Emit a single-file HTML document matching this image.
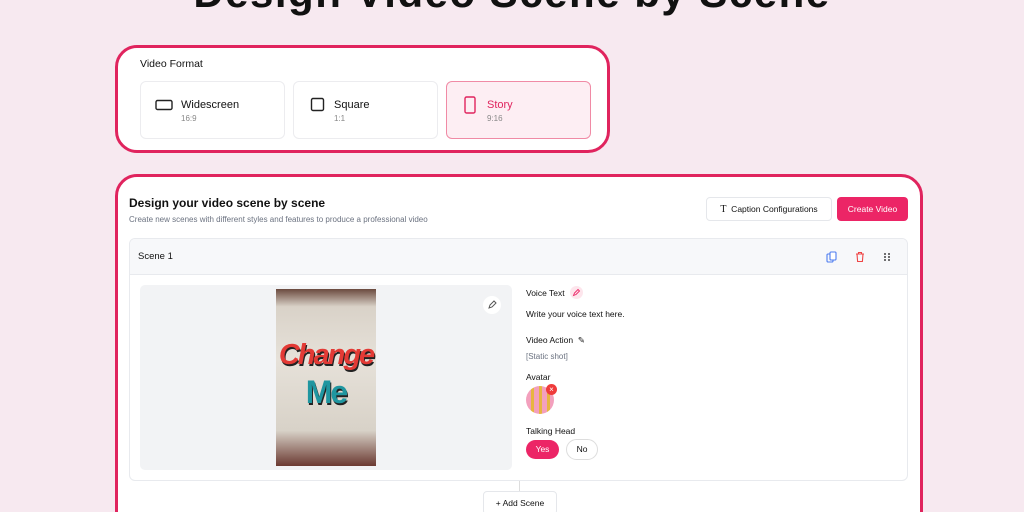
<!DOCTYPE html>
<html style="width:1024px;height:512px;overflow:hidden"><head><style>
*{box-sizing:border-box;margin:0;padding:0}
body{width:1024px;height:512px;background:#f7e9f0;font-family:"Liberation Sans",sans-serif;position:relative;overflow:hidden;color:#111}
.abs{position:absolute}
h1{position:absolute;left:0;width:1024px;text-align:center;top:-31px;font-size:42px;font-weight:bold;color:#111;letter-spacing:1.5px}
.card1{left:115px;top:45px;width:495px;height:108px;background:#fff;border:3px solid #e0245e;border-radius:22px}
.opt{position:absolute;top:33px;width:145px;height:58px;border:1px solid #ececef;border-radius:6px;background:#fff}
.opt .t{position:absolute;left:40px;top:17px;font-size:11px}
.opt .s{position:absolute;left:40px;top:32px;font-size:8px;color:#888}
.card2{left:115px;top:174px;width:808px;height:360px;background:#fff;border:3px solid #e0245e;border-radius:22px}
.btn{position:absolute;font-size:8.5px;border-radius:4px}
</style></head><body>
<h1>Design Video Scene by Scene</h1>
<div class="abs card1">
 <div class="abs" style="left:22px;top:10px;font-size:10.5px">Video Format</div>
 <div class="opt" style="left:22px"><svg class="abs" style="left:14px;top:17px" width="18" height="12"><rect x="1" y="1.5" width="16" height="9" rx="1.5" fill="none" stroke="#222" stroke-width="1.4"/></svg><div class="t">Widescreen</div><div class="s">16:9</div></div>
 <div class="opt" style="left:175px"><svg class="abs" style="left:16px;top:15px" width="16" height="16"><rect x="1.5" y="1.5" width="12" height="12" rx="1.5" fill="none" stroke="#222" stroke-width="1.4"/></svg><div class="t">Square</div><div class="s">1:1</div></div>
 <div class="opt" style="left:328px;background:#fdeef3;border-color:#f08aa5"><svg class="abs" style="left:17px;top:14px" width="12" height="18"><rect x="1" y="1" width="10" height="16" rx="1.5" fill="none" stroke="#e0245e" stroke-width="1.4"/></svg><div class="t" style="color:#e0245e">Story</div><div class="s">9:16</div></div>
</div>
<div class="abs card2">
 <div class="abs" style="left:11px;top:19px;font-size:12px;font-weight:bold">Design your video scene by scene</div>
 <div class="abs" style="left:11px;top:38px;font-size:8px;color:#6b7280">Create new scenes with different styles and features to produce a professional video</div>
 <div class="btn" style="left:588px;top:20px;width:126px;height:24px;border:1px solid #e5e7eb;line-height:22px;text-align:center"><b style="font-family:'Liberation Serif',serif;font-size:10px;font-weight:normal">T</b>&nbsp; Caption Configurations</div>
 <div class="btn" style="left:719px;top:20px;width:71px;height:24px;background:#ec2566;color:#fff;line-height:24px;text-align:center">Create Video</div>
 <div class="abs" style="left:11px;top:61px;width:779px;height:243px;border:1px solid #e8eaee;border-radius:6px;overflow:hidden">
  <div class="abs" style="left:0;top:0;width:779px;height:36px;background:#f7f8fa;border-bottom:1px solid #e8eaee"></div>
  <div class="abs" style="left:8px;top:12px;font-size:9.5px">Scene 1</div>
  <svg class="abs" style="left:696px;top:12px" width="12" height="12"><rect x="1" y="3" width="6" height="8" rx="1" fill="none" stroke="#4d7cf0" stroke-width="1.1"/><rect x="4" y="1" width="6" height="8" rx="1" fill="#fff" stroke="#4d7cf0" stroke-width="1.1"/></svg>
  <svg class="abs" style="left:724px;top:12px" width="12" height="12"><path d="M2 3h8M4.5 3V1.5h3V3M3 3l.6 7.5h4.8L9 3" fill="none" stroke="#ef4444" stroke-width="1.1"/></svg>
  <svg class="abs" style="left:753px;top:13px" width="8" height="10"><g fill="#444"><circle cx="2" cy="2" r="1"/><circle cx="6" cy="2" r="1"/><circle cx="2" cy="5" r="1"/><circle cx="6" cy="5" r="1"/><circle cx="2" cy="8" r="1"/><circle cx="6" cy="8" r="1"/></g></svg>
  <div class="abs" style="left:10px;top:46px;width:372px;height:185px;background:#f2f3f5;border-radius:5px"></div>
  <div class="abs" style="left:146px;top:50px;width:100px;height:177px;background:linear-gradient(180deg,#6b4a3e 0%,#d9d2c8 10%,#e6e1d9 40%,#d8d2c8 80%,#6b3a32 100%);overflow:hidden">
   <div class="abs" style="left:0;top:50px;width:100px;text-align:center;font-size:29px;font-weight:bold;color:#e33a35;font-style:italic;letter-spacing:-2px;text-shadow:1px 2px 0 #222">Change</div>
   <div class="abs" style="left:0;top:85px;width:100px;text-align:center;font-size:32px;font-weight:bold;color:#1f96a0;letter-spacing:-2px;text-shadow:1px 2px 0 #222">Me</div>
  </div>
  <div class="abs" style="left:353px;top:57px;width:18px;height:18px;border-radius:50%;background:#fff"></div>
  <svg class="abs" style="left:357px;top:61px" width="10" height="10"><path d="M2 8l1-3 4-4 2 2-4 4z" fill="none" stroke="#555" stroke-width="1"/></svg>
  <div class="abs" style="left:396px;top:49px;font-size:8.5px">Voice Text</div>
  <div class="abs" style="left:440px;top:47px;width:13px;height:13px;border-radius:50%;background:#fde5ec"></div>
  <svg class="abs" style="left:442px;top:49px" width="9" height="9"><path d="M1.5 7.5l1-2.5 3.5-3.5 1.5 1.5-3.5 3.5z" fill="none" stroke="#ec2566" stroke-width="0.9"/></svg>
  <div class="abs" style="left:396px;top:70px;font-size:8.5px">Write your voice text here.</div>
  <div class="abs" style="left:396px;top:96px;font-size:8.5px">Video Action &nbsp;✎</div>
  <div class="abs" style="left:396px;top:113px;font-size:8px;color:#6b7280">[Static shot]</div>
  <div class="abs" style="left:396px;top:133px;font-size:8.5px">Avatar</div>
  <div class="abs" style="left:396px;top:147px;width:28px;height:28px;border-radius:50%;background:repeating-linear-gradient(90deg,#f3a0bd 0 5px,#e7b540 5px 8px)"></div>
  <div class="abs" style="left:416px;top:145px;width:11px;height:11px;border-radius:50%;background:#ef3b3b;color:#fff;font-size:8px;line-height:11px;text-align:center">×</div>
  <div class="abs" style="left:396px;top:187px;font-size:8.5px">Talking Head</div>
  <div class="abs" style="left:396px;top:201px;width:33px;height:19px;border-radius:10px;background:#ec2566;color:#fff;font-size:8.5px;line-height:19px;text-align:center">Yes</div>
  <div class="abs" style="left:436px;top:200px;width:32px;height:21px;border-radius:11px;border:1px solid #ddd;font-size:8.5px;line-height:19px;text-align:center">No</div>
 </div>
 <div class="abs" style="left:401px;top:304px;width:1px;height:12px;background:#ddd"></div>
 <div class="abs" style="left:365px;top:314px;width:74px;height:24px;background:#fff;border:1px solid #e5e7eb;border-radius:4px;font-size:8.5px;line-height:22px;text-align:center">+ Add Scene</div>
</div>
</body></html>
